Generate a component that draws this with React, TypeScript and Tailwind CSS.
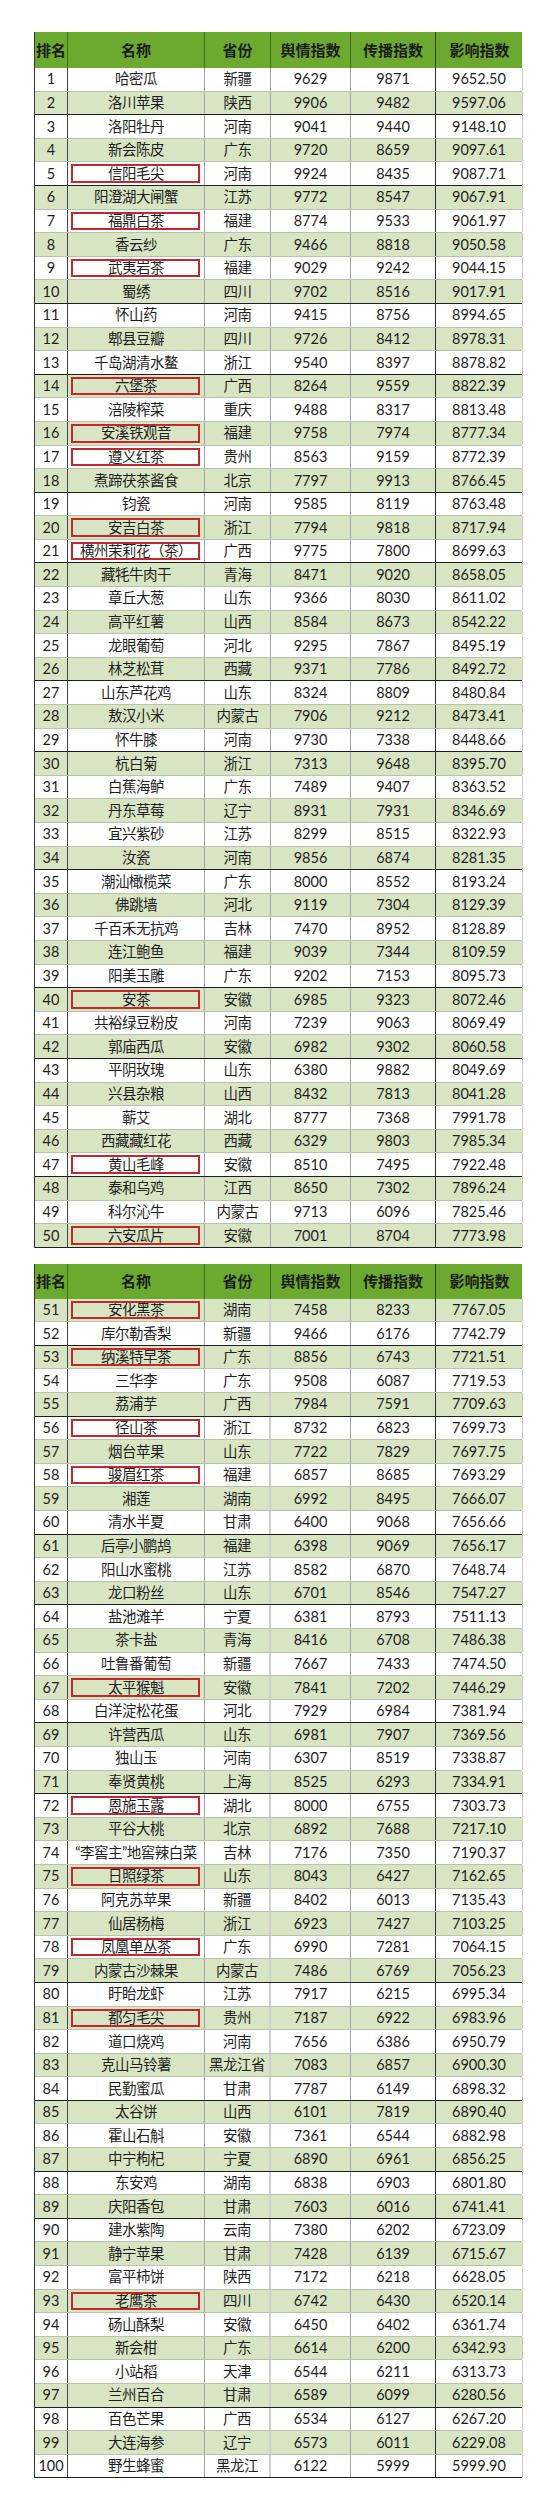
import React from 'react';

const raw1 = `1|哈密瓜|新疆|9629|9871|9652.50
2|洛川苹果|陕西|9906|9482|9597.06
3|洛阳牡丹|河南|9041|9440|9148.10
4|新会陈皮|广东|9720|8659|9097.61
5|信阳毛尖|河南|9924|8435|9087.71
6|阳澄湖大闸蟹|江苏|9772|8547|9067.91
7|福鼎白茶|福建|8774|9533|9061.97
8|香云纱|广东|9466|8818|9050.58
9|武夷岩茶|福建|9029|9242|9044.15
10|蜀绣|四川|9702|8516|9017.91
11|怀山药|河南|9415|8756|8994.65
12|郫县豆瓣|四川|9726|8412|8978.31
13|千岛湖清水鳌|浙江|9540|8397|8878.82
14|六堡茶|广西|8264|9559|8822.39
15|涪陵榨菜|重庆|9488|8317|8813.48
16|安溪铁观音|福建|9758|7974|8777.34
17|遵义红茶|贵州|8563|9159|8772.39
18|煮蹄茯茶酱食|北京|7797|9913|8766.45
19|钧瓷|河南|9585|8119|8763.48
20|安吉白茶|浙江|7794|9818|8717.94
21|横州茉莉花（茶）|广西|9775|7800|8699.63
22|藏牦牛肉干|青海|8471|9020|8658.05
23|章丘大葱|山东|9366|8030|8611.02
24|高平红薯|山西|8584|8673|8542.22
25|龙眼葡萄|河北|9295|7867|8495.19
26|林芝松茸|西藏|9371|7786|8492.72
27|山东芦花鸡|山东|8324|8809|8480.84
28|敖汉小米|内蒙古|7906|9212|8473.41
29|怀牛膝|河南|9730|7338|8448.66
30|杭白菊|浙江|7313|9648|8395.70
31|白蕉海鲈|广东|7489|9407|8363.52
32|丹东草莓|辽宁|8931|7931|8346.69
33|宜兴紫砂|江苏|8299|8515|8322.93
34|汝瓷|河南|9856|6874|8281.35
35|潮汕橄榄菜|广东|8000|8552|8193.24
36|佛跳墙|河北|9119|7304|8129.39
37|千百禾无抗鸡|吉林|7470|8952|8128.89
38|连江鲍鱼|福建|9039|7344|8109.59
39|阳美玉雕|广东|9202|7153|8095.73
40|安茶|安徽|6985|9323|8072.46
41|共裕绿豆粉皮|河南|7239|9063|8069.49
42|郭庙西瓜|安徽|6982|9302|8060.58
43|平阴玫瑰|山东|6380|9882|8049.69
44|兴县杂粮|山西|8432|7813|8041.28
45|蕲艾|湖北|8777|7368|7991.78
46|西藏藏红花|西藏|6329|9803|7985.34
47|黄山毛峰|安徽|8510|7495|7922.48
48|泰和乌鸡|江西|8650|7302|7896.24
49|科尔沁牛|内蒙古|9713|6096|7825.46
50|六安瓜片|安徽|7001|8704|7773.98`;

const raw2 = `51|安化黑茶|湖南|7458|8233|7767.05
52|库尔勒香梨|新疆|9466|6176|7742.79
53|纳溪特早茶|广东|8856|6743|7721.51
54|三华李|广东|9508|6087|7719.53
55|荔浦芋|广西|7984|7591|7709.63
56|径山茶|浙江|8732|6823|7699.73
57|烟台苹果|山东|7722|7829|7697.75
58|骏眉红茶|福建|6857|8685|7693.29
59|湘莲|湖南|6992|8495|7666.07
60|清水半夏|甘肃|6400|9068|7656.66
61|后亭小鹏鸪|福建|6398|9069|7656.17
62|阳山水蜜桃|江苏|8582|6870|7648.74
63|龙口粉丝|山东|6701|8546|7547.27
64|盐池滩羊|宁夏|6381|8793|7511.13
65|茶卡盐|青海|8416|6708|7486.38
66|吐鲁番葡萄|新疆|7667|7433|7474.50
67|太平猴魁|安徽|7841|7202|7446.29
68|白洋淀松花蛋|河北|7929|6984|7381.94
69|许营西瓜|山东|6981|7907|7369.56
70|独山玉|河南|6307|8519|7338.87
71|奉贤黄桃|上海|8525|6293|7334.91
72|恩施玉露|湖北|8000|6755|7303.73
73|平谷大桃|北京|6892|7688|7217.10
74|“李窖主”地窖辣白菜|吉林|7176|7350|7190.37
75|日照绿茶|山东|8043|6427|7162.65
76|阿克苏苹果|新疆|8402|6013|7135.43
77|仙居杨梅|浙江|6923|7427|7103.25
78|凤凰单丛茶|广东|6990|7281|7064.15
79|内蒙古沙棘果|内蒙古|7486|6769|7056.23
80|盱眙龙虾|江苏|7917|6215|6995.34
81|都匀毛尖|贵州|7187|6922|6983.96
82|道口烧鸡|河南|7656|6386|6950.79
83|克山马铃薯|黑龙江省|7083|6857|6900.30
84|民勤蜜瓜|甘肃|7787|6149|6898.32
85|太谷饼|山西|6101|7819|6890.40
86|霍山石斛|安徽|7361|6544|6882.98
87|中宁枸杞|宁夏|6890|6961|6856.25
88|东安鸡|湖南|6838|6903|6801.80
89|庆阳香包|甘肃|7603|6016|6741.41
90|建水紫陶|云南|7380|6202|6723.09
91|静宁苹果|甘肃|7428|6139|6715.67
92|富平柿饼|陕西|7172|6218|6628.05
93|老鹰茶|四川|6742|6430|6520.14
94|砀山酥梨|安徽|6450|6402|6361.74
95|新会柑|广东|6614|6200|6342.93
96|小站稻|天津|6544|6211|6313.73
97|兰州百合|甘肃|6589|6099|6280.56
98|百色芒果|广西|6534|6127|6267.20
99|大连海参|辽宁|6573|6011|6229.08
100|野生蜂蜜|黑龙江|6122|5999|5999.90`;

const parse = (s: string) => s.split('\n').map((l) => l.split('|'));

// ranks framed in red
const boxed = new Set([5, 7, 9, 14, 16, 17, 20, 21, 40, 47, 50, 51, 53, 56, 58, 67, 72, 75, 78, 81, 93]);
// rows followed by a dark rule (scan artefacts in the source sheet)
const darkRule = new Set([2, 5, 10, 13, 18, 21, 26, 29, 34, 39, 42, 47, 50, 52, 55, 60, 63, 68, 71, 79, 84, 87, 89, 97, 100]);

const grid = 'grid grid-cols-[33px_137px_66px_80px_85px_87px]';

const Header: React.FC<{ tall: boolean }> = ({ tall }) => (
  <div className={`${grid} ${tall ? 'h-[36px]' : 'h-[35px]'} bg-[#6ca92f] text-[15px] font-bold text-[#1c1c1c]`}>
    <div className="flex items-center justify-center border-r border-[#3f6b1c]">排名</div>
    <div className="flex items-center justify-center border-r border-[#3f6b1c]">名称</div>
    <div className="flex items-center justify-center border-r border-[#3f6b1c]">省份</div>
    <div className="flex items-center justify-center border-r border-[#3f6b1c]">舆情指数</div>
    <div className="flex items-center justify-center border-r border-[#2a4a12]">传播指数</div>
    <div className="flex items-center justify-center">影响指数</div>
  </div>
);

const Row: React.FC<{ r: string[]; green: boolean; second: boolean }> = ({ r, green, second }) => {
  const rank = Number(r[0]);
  return (
    <div
      className={`${grid} h-[23.6px] border-b ${darkRule.has(rank) ? 'border-[#1e1e1e]' : 'border-[#b9c2ad]'} ${
        green ? 'bg-[#d8e5c3]' : 'bg-white'
      } text-[14.5px] text-[#1f1f1f]`}
    >
      <div className="flex items-center justify-center border-r border-[#444]">{r[0]}</div>
      <div className="relative flex items-center justify-center border-r border-[#a3a3a3] whitespace-nowrap tracking-[-0.5px]">
        {boxed.has(rank) && <span className="absolute left-[3px] right-[4px] top-[2px] bottom-[2px] border-2 border-[#c4282c]" />}
        {r[1]}
      </div>
      <div className={`flex items-center justify-center ${second ? 'border-r-2 border-[#cfcfcf]' : 'border-r border-[#a3a3a3]'} whitespace-nowrap tracking-[-0.5px]`}>{r[2]}</div>
      <div className="flex items-center justify-center border-r border-[#a3a3a3]">{r[3]}</div>
      <div className="flex items-center justify-center border-r border-[#2b2b2b]">{r[4]}</div>
      <div className="flex items-center justify-center border-r border-[#c9c9c9]">{r[5]}</div>
    </div>
  );
};

export default function App() {
  const t1 = parse(raw1);
  const t2 = parse(raw2);
  return (
    <div className="w-[554px] min-h-[2513px] bg-white pt-[32px] pl-[34px] font-['Lato','Noto_Sans_CJK_SC',sans-serif]">
      <div className="w-[488px] border-l border-[#333]">
        <Header tall />
        {t1.map((r, i) => (
          <Row key={r[0]} r={r} green={i % 2 === 1} second={false} />
        ))}
      </div>
      <div className="mt-[16px] w-[488px] border-l border-[#333]">
        <Header tall={false} />
        {t2.map((r, i) => (
          <Row key={r[0]} r={r} green={i % 2 === 0} second />
        ))}
      </div>
    </div>
  );
}
